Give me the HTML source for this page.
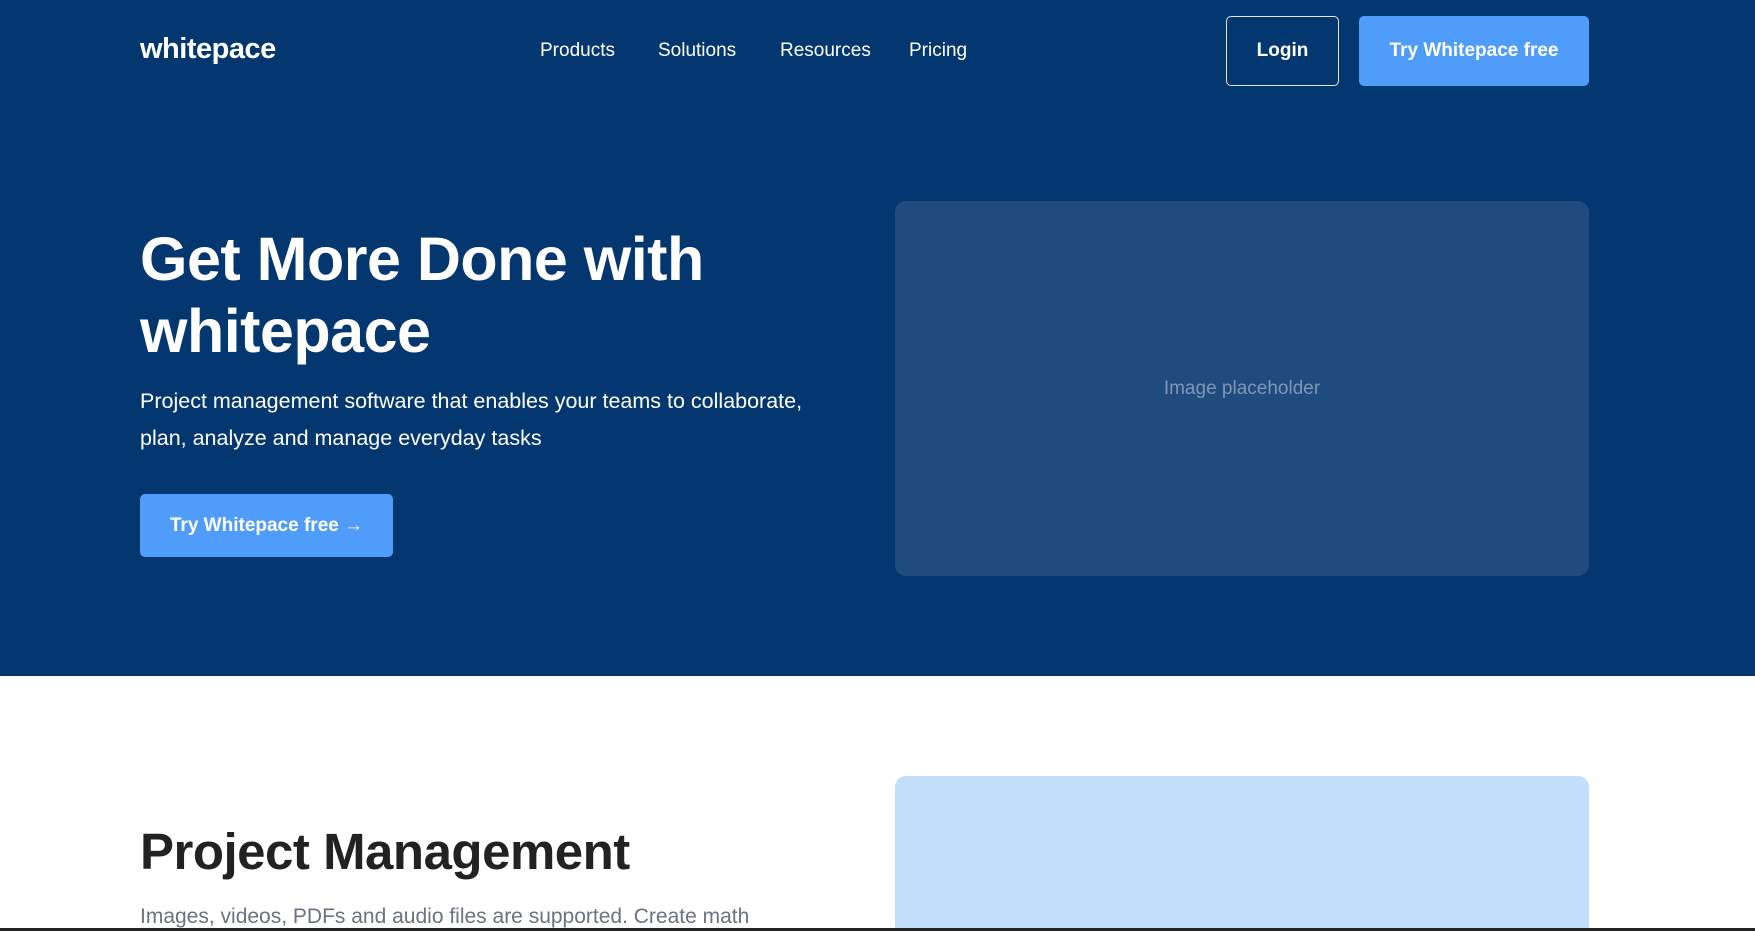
<!DOCTYPE html>
<html><head><meta charset="utf-8"><style>
*{margin:0;padding:0;box-sizing:border-box}
html,body{width:1755px;height:931px;overflow:hidden;font-family:"Liberation Sans",sans-serif;background:#fff}
.wrap{position:relative;width:1755px;height:931px;overflow:hidden}
.hero{position:absolute;left:0;top:0;width:1755px;height:676px;background:#04376f}
.abs{position:absolute;white-space:nowrap}
.logo{left:140px;top:33px;font-size:29px;font-weight:bold;color:#fff;letter-spacing:-0.5px}
.nav{top:40px;font-size:19px;color:#fff}
.login{left:1226px;top:16px;width:113px;height:70px;border:1px solid #e5e7eb;border-radius:5px;color:#fff;font-size:19px;font-weight:bold;display:flex;align-items:center;justify-content:center}
.try{left:1359px;top:16px;width:230px;height:70px;background:#509cfa;border-radius:5px;color:#fff;font-size:19px;font-weight:bold;display:flex;align-items:center;justify-content:center}
h1{position:absolute;left:140px;top:223px;font-size:61px;line-height:72px;color:#fff;font-weight:bold;letter-spacing:-0.5px;white-space:nowrap}
.p{left:140px;top:383px;font-size:21.5px;line-height:37px;color:#fff}
.cta{left:140px;top:494px;width:253px;height:63px;background:#509cfa;border-radius:5px;color:#fff;font-size:19px;font-weight:bold;display:flex;align-items:center;justify-content:center}
.ph{left:895px;top:201px;width:694px;height:375px;background:#1f4b7f;border-radius:11px;color:#7f96b5;font-size:19px;display:flex;align-items:center;justify-content:center}
.ph2{left:895px;top:776px;width:694px;height:200px;background:#c4dffc;border-radius:11px}
h2{position:absolute;left:140px;top:822px;font-size:51px;color:#222;font-weight:bold;letter-spacing:-0.5px;white-space:nowrap}
.p2{left:140px;top:905px;font-size:21px;color:#6b7280}
.bar{left:0;top:928px;width:1755px;height:3px;background:#222}
</style></head><body><div class="wrap">
<div class="hero"></div>
<div class="abs logo">whitepace</div>
<div class="abs nav" style="left:540px">Products</div>
<div class="abs nav" style="left:658px">Solutions</div>
<div class="abs nav" style="left:780px">Resources</div>
<div class="abs nav" style="left:909px">Pricing</div>
<div class="abs login">Login</div>
<div class="abs try">Try Whitepace free</div>
<h1>Get More Done with<br>whitepace</h1>
<div class="abs p">Project management software that enables your teams to collaborate,<br>plan, analyze and manage everyday tasks</div>
<div class="abs cta">Try Whitepace free →</div>
<div class="abs ph">Image placeholder</div>
<div class="abs ph2"></div>
<h2>Project Management</h2>
<div class="abs p2">Images, videos, PDFs and audio files are supported. Create math</div>
<div class="abs bar"></div>
</div></body></html>
